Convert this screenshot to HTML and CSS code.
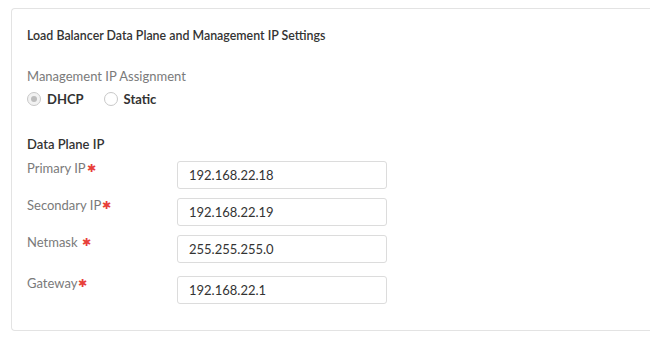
FILE: index.html
```html
<!DOCTYPE html>
<html lang="en">
<head>
<meta charset="UTF-8">
<meta name="viewport" content="width=device-width, initial-scale=1.0">
<title>Load Balancer Settings</title>
<link rel="stylesheet" href="styles.css">
</head>
<body>

<div class="card">
    <h3 class="card-title">Load Balancer Data Plane and Management IP Settings</h3>

    <div class="field-label">Management IP Assignment</div>
    <div class="radio-row">
        <label class="radio"><span class="dot checked"></span>DHCP</label>
        <label class="radio"><span class="dot"></span>Static</label>
    </div>

    <h4 class="section-title">Data Plane IP</h4>
    <div class="form-row">
        <label for="primary">Primary IP<span class="req">✱</span></label>
        <input type="text" id="primary" value="192.168.22.18">
    </div>
    <div class="form-row">
        <label for="secondary">Secondary IP<span class="req">✱</span></label>
        <input type="text" id="secondary" value="192.168.22.19">
    </div>
    <div class="form-row">
        <label for="netmask">Netmask <span class="req">✱</span></label>
        <input type="text" id="netmask" value="255.255.255.0">
    </div>
    <div class="form-row gap-top">
        <label for="gateway">Gateway<span class="req">✱</span></label>
        <input type="text" id="gateway" value="192.168.22.1">
    </div>
</div>

</body>
</html>
```

FILE: styles.css
```css
body {
    background-color: #fff;
    color: #333;
    font-family: Lato, "Open Sans", Arial, sans-serif;
    margin: 0;
    padding: 0;
}
.card {
    height: 323px;
    box-sizing: border-box;
    margin: 8px 0 0 11px;
    padding: 20px 0 0 15px;
    border: 1px solid #e3e3e3;
    border-right: none;
    border-radius: 4px 0 0 4px;
}
.card-title {
    font-size: 12.4px;
    font-weight: 600;
    margin: 0;
    line-height: 14px;
    color: #333;
}
.field-label {
    margin-top: 25px;
    font-size: 13px;
    line-height: 16px;
    color: #7a7a7a;
}
.radio-row {
    display: flex;
    align-items: center;
    margin-top: 7px;
}
.radio {
    display: flex;
    align-items: center;
    font-size: 13px;
    font-weight: 700;
    color: #333;
    margin-right: 20px;
}
.dot {
    width: 12px;
    height: 12px;
    border: 1px solid #c8c8c8;
    border-radius: 50%;
    margin-right: 6px;
    background-color: #fff;
    position: relative;
}
.dot.checked {
    background-color: #f2f2f2;
}
.dot.checked::after {
    content: "";
    position: absolute;
    left: 3px;
    top: 3px;
    width: 6px;
    height: 6px;
    border-radius: 50%;
    background-color: #bdbdbd;
}
.section-title {
    font-size: 13px;
    font-weight: 600;
    margin: 30px 0 0 0;
    line-height: 14px;
    color: #333;
}
.form-row {
    display: flex;
    align-items: flex-start;
    margin-top: 10px;
}
.form-row + .form-row {
    margin-top: 9px;
}
.form-row.gap-top {
    margin-top: 13px;
}
.form-row label {
    width: 150px;
    font-size: 13px;
    line-height: 13px;
    color: #7a7a7a;
}
.req {
    color: #e8403a;
    font-size: 11px;
    margin-left: 1px;
    vertical-align: 1px;
}
input[type="text"] {
    width: 210px;
    height: 28px;
    box-sizing: border-box;
    padding: 0 11px;
    border: 1px solid #dcdcdc;
    border-radius: 3px;
    font-family: Lato, "Open Sans", Arial, sans-serif;
    font-size: 13px;
    color: #333;
    outline: none;
}
```
